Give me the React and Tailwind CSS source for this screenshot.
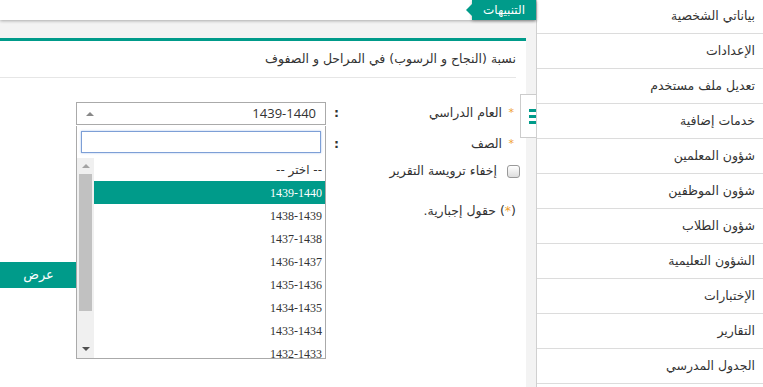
export default function App() {
  const ar = { fontFamily: "'DejaVu Sans', 'Noto Sans', sans-serif" };
  const menu = [
    "بياناتي الشخصية",
    "الإعدادات",
    "تعديل ملف مستخدم",
    "خدمات إضافية",
    "شؤون المعلمين",
    "شؤون الموظفين",
    "شؤون الطلاب",
    "الشؤون التعليمية",
    "الإختبارات",
    "التقارير",
    "الجدول المدرسي",
  ];
  const options = [
    "-- اختر --",
    "1439-1440",
    "1438-1439",
    "1437-1438",
    "1436-1437",
    "1435-1436",
    "1434-1435",
    "1433-1434",
    "1432-1433",
  ];
  return (
    <div className="relative flex w-[763px] h-[387px] overflow-hidden bg-[#f3f3f3] text-[#333]" style={ar}>
      {/* main */}
      <div className="w-[536px] shrink-0 flex flex-col">
        <div className="relative z-10 h-[20px] bg-white shadow-[0_1px_3px_rgba(0,0,0,0.3)] flex justify-end">
          <div className="relative h-[20px] w-[64px] bg-[#009b8a] flex items-center justify-center text-white text-[12px] shadow-[0_1px_3px_rgba(0,0,0,0.3)]" dir="rtl">
            <span className="absolute left-[-6px] top-[4px] w-0 h-0 border-t-[6px] border-b-[6px] border-r-[6px] border-t-transparent border-b-transparent border-r-[#009b8a]" />
            التنبيهات
          </div>
        </div>
        <div className="h-[18px] shrink-0" />
        <div className="flex-1 mr-[10px] bg-white border-t-[3px] border-[#009b8a] flex flex-col" dir="rtl">
          <div className="h-[37px] mr-[10px] border-b border-[#e6e6e6] flex items-center text-[12.5px] pt-[1px]">
            نسبة (النجاح و الرسوب) في المراحل و الصفوف
          </div>
          <div className="pt-[24px] pr-[10px] flex flex-col text-[12.5px]">
            <div className="flex items-center h-[23px]">
              <div className="w-[172px] flex items-center">
                <span className="text-[#f0a030] text-[11px] w-[12px] pr-[2px]">*</span>
                <span className="mr-[2px]">العام الدراسي</span>
              </div>
              <div className="w-[10px] text-left font-bold">:</div>
              <div className="mr-[8px] w-[250px] h-[23px] border border-[#aaa] flex items-center justify-between px-[9px]">
                <span style={{ fontFamily: "'Open Sans', sans-serif" }} className="text-[13px]">1439-1440</span>
                <span className="w-0 h-0 border-l-[4px] border-r-[4px] border-b-[4px] border-l-transparent border-r-transparent border-b-[#888]" />
              </div>
            </div>
            <div className="flex items-center h-[23px] mt-[8px]">
              <div className="w-[172px] flex items-center">
                <span className="text-[#f0a030] text-[11px] w-[12px] pr-[2px]">*</span>
                <span className="mr-[2px]">الصف</span>
              </div>
              <div className="w-[10px] text-left font-bold">:</div>
            </div>
            <div className="flex items-center h-[23px] mt-[4px]">
              <span className="mr-[-4px] w-[13px] h-[13px] rounded-[3px] border border-[#999] bg-gradient-to-b from-[#fff] to-[#ddd]" />
              <span className="mr-[10px]">إخفاء ترويسة التقرير</span>
            </div>
            <div className="flex items-center h-[20px] mt-[18px]">
              <span>(<span className="text-[#f0a030]">*</span>) حقول إجبارية.</span>
            </div>
          </div>
          <div className="flex justify-end mt-[41px]">
            <div className="w-[77px] h-[26px] bg-[#009b8a] text-white text-[13px] flex items-center justify-center">عرض</div>
          </div>
        </div>
      </div>

      {/* sidebar */}
      <aside className="w-[227px] shrink-0 bg-white border-l border-[#d0d0d0] flex flex-col" dir="rtl">
        <div className="-mt-[1px]">
          {menu.map((m) => (
            <div key={m} className="h-[35px] border-b border-[#dcdcdc] flex items-center pr-[8px] text-[12.5px]">
              {m}
            </div>
          ))}
        </div>
      </aside>

      {/* toggle button */}
      <div className="absolute left-[520px] top-[94px] w-[16px] h-[44px] bg-white border-l border-t border-b border-[#ccc] flex flex-col items-end justify-center gap-[3px]">
        <span className="w-[7px] h-[3px] bg-[#009b8a]" />
        <span className="w-[7px] h-[3px] bg-[#009b8a]" />
        <span className="w-[7px] h-[3px] bg-[#009b8a]" />
      </div>

      {/* dropdown */}
      <div className="absolute left-[76px] top-[126px] w-[250px] h-[233px] bg-white border-l border-r border-b border-[#aaa] flex flex-col overflow-hidden">
        <div className="mx-[4px] mt-[5px] h-[22px] border border-[#7d9fd6] shadow-[0_0_2px_rgba(90,140,220,0.5)]" />
        <div className="mt-[5px] flex flex-1 overflow-hidden">
          <div className="w-[17px] shrink-0 bg-[#f0f0f0] flex flex-col items-center relative">
            <span className="mt-[6px] w-0 h-0 border-l-[4px] border-r-[4px] border-b-[4px] border-l-transparent border-r-transparent border-b-[#a3a3a3]" />
            <div className="mt-[6px] w-[13px] h-[137px] bg-[#c1c1c1]" />
            <span className="absolute bottom-[7px] w-0 h-0 border-l-[4px] border-r-[4px] border-t-[4px] border-l-transparent border-r-transparent border-t-[#505050]" />
          </div>
          <div className="flex-1 flex flex-col" dir="rtl" style={{ fontFamily: "'Liberation Serif', serif" }}>
            {options.map((o, i) => (
              <div
                key={o}
                className={
                  "h-[23px] shrink-0 flex items-center pr-[3px] text-[12px] " +
                  (i === 1 ? "bg-[#009b8a] text-white" : "text-[#333]")
                }
                style={i === 0 ? ar : undefined}
              >
                {o}
              </div>
            ))}
          </div>
        </div>
      </div>
    </div>
  );
}
